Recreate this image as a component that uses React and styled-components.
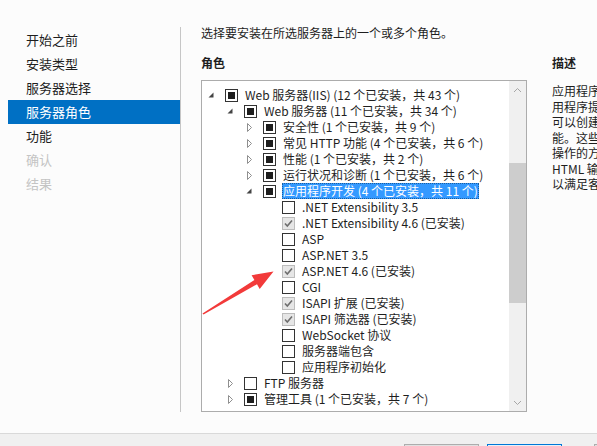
import React from "react";
import styled, { createGlobalStyle, css } from "styled-components";

const GlobalStyle = createGlobalStyle`
  html, body {
    margin: 0;
    padding: 0;
    background: #fcfcfc;
    overflow: hidden;
  }
  body {
    font-family: "Noto Sans CJK SC", "Noto Sans", sans-serif;
    color: #1e1e1e;
  }
`;

const navItems = [
  { label: "开始之前" },
  { label: "安装类型" },
  { label: "服务器选择" },
  { label: "服务器角色", active: true },
  { label: "功能" },
  { label: "确认", disabled: true },
  { label: "结果", disabled: true },
];

// level: tree depth, exp: expanded / collapsed / none, box: partial / empty / checked
const treeRows = [
  { level: 1, exp: "open", box: "partial", label: "Web 服务器(IIS) (12 个已安装，共 43 个)" },
  { level: 2, exp: "open", box: "partial", label: "Web 服务器 (11 个已安装，共 34 个)" },
  { level: 3, exp: "closed", box: "partial", label: "安全性 (1 个已安装，共 9 个)" },
  { level: 3, exp: "closed", box: "partial", label: "常见 HTTP 功能 (4 个已安装，共 6 个)" },
  { level: 3, exp: "closed", box: "partial", label: "性能 (1 个已安装，共 2 个)" },
  { level: 3, exp: "closed", box: "partial", label: "运行状况和诊断 (1 个已安装，共 6 个)" },
  { level: 3, exp: "open", box: "partial", label: "应用程序开发 (4 个已安装，共 11 个)", selected: true },
  { level: 4, box: "empty", label: ".NET Extensibility 3.5" },
  { level: 4, box: "checked", label: ".NET Extensibility 4.6 (已安装)" },
  { level: 4, box: "empty", label: "ASP" },
  { level: 4, box: "empty", label: "ASP.NET 3.5" },
  { level: 4, box: "checked", label: "ASP.NET 4.6 (已安装)" },
  { level: 4, box: "empty", label: "CGI" },
  { level: 4, box: "checked", label: "ISAPI 扩展 (已安装)" },
  { level: 4, box: "checked", label: "ISAPI 筛选器 (已安装)" },
  { level: 4, box: "empty", label: "WebSocket 协议" },
  { level: 4, box: "empty", label: "服务器端包含" },
  { level: 4, box: "empty", label: "应用程序初始化" },
  { level: 2, exp: "closed", box: "empty", label: "FTP 服务器" },
  { level: 2, exp: "closed", box: "partial", label: "管理工具 (1 个已安装，共 7 个)" },
];

const descLines = [
  "应用程序开发提供了用于开发和托管 Web 应",
  "用程序提供的基础结构。使用这些功能",
  "可以创建 Web 内容或扩展 IIS 的功",
  "能。这些技术通常提供了一种执行动态",
  "操作的方法，从而能够创建",
  "HTML 输出，然后 IIS 发送该输出",
  "以满足客户端请求。",
];

const Page = styled.div`
  position: relative;
  width: 597px;
  height: 446px;
  display: flex;
  flex-direction: column;
  overflow: hidden;
`;

const Main = styled.div`
  height: 433px;
  flex-shrink: 0;
  display: flex;
`;

const Nav = styled.nav`
  width: 172px;
  margin-left: 8px;
  padding-top: 28px;
  flex-shrink: 0;
`;

const NavItem = styled.div`
  height: 24px;
  line-height: 24px;
  padding-left: 18px;
  font-size: 13px;
  color: #1e1e1e;
  ${(p) =>
    p.$active &&
    css`
      background: #0070c4;
      color: #ffffff;
    `}
  ${(p) =>
    p.$disabled &&
    css`
      color: #c4c4c4;
    `}
`;

const Divider = styled.div`
  width: 1px;
  margin-top: 27px;
  height: 385px;
  background: #c6c6c6;
  flex-shrink: 0;
`;

const Content = styled.section`
  flex: 1;
  padding: 25px 0 0 20px;
  min-width: 0;
`;

const Intro = styled.div`
  font-size: 12px;
  line-height: 16px;
  white-space: nowrap;
`;

const Columns = styled.div`
  display: flex;
  gap: 25px;
  margin-top: 14px;
`;

const RoleColumn = styled.div`
  width: 326px;
  flex-shrink: 0;
`;

const DescColumn = styled.div`
  flex: 1;
  min-width: 0;
  overflow: hidden;
`;

const Heading = styled.div`
  font-size: 12px;
  font-weight: bold;
  line-height: 16px;
  height: 16px;
`;

const TreeBox = styled.div`
  margin-top: 9px;
  height: 332px;
  box-sizing: border-box;
  border: 1px solid #acacac;
  background: #ffffff;
  display: flex;
`;

const TreeList = styled.div`
  flex: 1;
  padding-top: 6px;
  overflow: hidden;
`;

const Row = styled.div`
  display: flex;
  align-items: center;
  height: 16px;
  padding-left: ${(p) => 4 + (p.$level - 1) * 19}px;
  font-size: 12px;
  white-space: nowrap;
`;

const Expander = styled.span`
  width: 19px;
  height: 16px;
  flex-shrink: 0;
  display: flex;
  align-items: center;
`;

const Box = styled.span`
  width: 13px;
  height: 13px;
  box-sizing: border-box;
  flex-shrink: 0;
  border: 1px solid #333333;
  background: #ffffff;
  display: flex;
  align-items: center;
  justify-content: center;
  ${(p) =>
    p.$state === "checked" &&
    css`
      border-color: #bcbcbc;
      background: #e6e6e6;
    `}
`;

const Fill = styled.span`
  width: 7px;
  height: 7px;
  background: #1e1e1e;
`;

const Label = styled.span`
  margin-left: 6px;
  line-height: 16px;
  height: 16px;
  padding: 0 1px;
  ${(p) =>
    p.$selected &&
    css`
      background: #3399ff;
      color: #ffffff;
      outline: 1px dotted #1b5e9e;
      outline-offset: -1px;
    `}
`;

const ScrollBar = styled.div`
  width: 17px;
  flex-shrink: 0;
  background: #f0f0f0;
  display: flex;
  flex-direction: column;
`;

const ScrollButton = styled.div`
  height: 17px;
  display: flex;
  align-items: center;
  justify-content: center;
`;

const Track = styled.div`
  flex: 1;
  padding-top: 65px;
`;

const Thumb = styled.div`
  height: 140px;
  background: #cdcdcd;
`;

const DescText = styled.div`
  margin-top: 12px;
  font-size: 12px;
  line-height: 15.5px;
  white-space: nowrap;
`;

const Footer = styled.footer`
  flex: 1;
  min-height: 0;
  overflow: hidden;
  background: #f0f0f0;
  border-top: 1px solid #d9d9d9;
  display: flex;
  align-items: flex-start;
  padding: 10px 0 0 404px;
  gap: 8px;
`;

const Button = styled.div`
  width: 75px;
  height: 23px;
  box-sizing: border-box;
  flex-shrink: 0;
  border: 1px solid #adadad;
  background: #e1e1e1;
  ${(p) =>
    p.$primary &&
    css`
      border-color: #0078d7;
      background: #e5f1fb;
    `}
  ${(p) =>
    p.$apart &&
    css`
      margin-left: 24px;
    `}
`;

const Arrow = styled.svg`
  position: absolute;
  left: 0;
  top: 0;
  pointer-events: none;
`;

const Toggle = ({ exp }) => {
  if (exp === "open") {
    return (
      <svg width="8" height="8" viewBox="0 0 8 8" style={{ marginLeft: 1 }}>
        <polygon points="6.5,1.5 6.5,6.5 1.5,6.5" fill="#444444" />
      </svg>
    );
  }
  if (exp === "closed") {
    return (
      <svg width="8" height="9" viewBox="0 0 8 9" style={{ marginLeft: 2 }}>
        <polygon points="1.5,0.5 5.5,4.5 1.5,8.5" fill="none" stroke="#8f8f8f" strokeWidth="1" />
      </svg>
    );
  }
  return null;
};

const CheckBox = ({ state }) => (
  <Box $state={state}>
    {state === "partial" && <Fill />}
    {state === "checked" && (
      <svg width="11" height="11" viewBox="0 0 11 11">
        <polyline points="2,5.5 4.3,8 9,2.5" fill="none" stroke="#6e6e6e" strokeWidth="1.6" />
      </svg>
    )}
  </Box>
);

const Chevron = ({ up }) => (
  <svg width="9" height="6" viewBox="0 0 9 6">
    <polyline
      points={up ? "1,5 4.5,1.5 8,5" : "1,1 4.5,4.5 8,1"}
      fill="none"
      stroke="#a6a6a6"
      strokeWidth="1"
    />
  </svg>
);

export default function App() {
  return (
    <Page>
      <GlobalStyle />
      <Main>
        <Nav>
          {navItems.map((item) => (
            <NavItem key={item.label} $active={item.active} $disabled={item.disabled}>
              {item.label}
            </NavItem>
          ))}
        </Nav>
        <Divider />
        <Content>
          <Intro>选择要安装在所选服务器上的一个或多个角色。</Intro>
          <Columns>
            <RoleColumn>
              <Heading>角色</Heading>
              <TreeBox>
                <TreeList>
                  {treeRows.map((row, i) => (
                    <Row key={i} $level={row.level}>
                      <Expander>
                        <Toggle exp={row.exp} />
                      </Expander>
                      <CheckBox state={row.box} />
                      <Label $selected={row.selected}>{row.label}</Label>
                    </Row>
                  ))}
                </TreeList>
                <ScrollBar>
                  <ScrollButton>
                    <Chevron up />
                  </ScrollButton>
                  <Track>
                    <Thumb />
                  </Track>
                  <ScrollButton>
                    <Chevron />
                  </ScrollButton>
                </ScrollBar>
              </TreeBox>
            </RoleColumn>
            <DescColumn>
              <Heading>描述</Heading>
              <DescText>
                {descLines.map((line) => (
                  <div key={line}>{line}</div>
                ))}
              </DescText>
            </DescColumn>
          </Columns>
        </Content>
      </Main>
      <Footer>
        <Button />
        <Button $primary />
        <Button $apart />
      </Footer>
      <Arrow width="597" height="446" viewBox="0 0 597 446">
        <polygon
          points="202.5,313.5 254.4,280 251.6,275.2 273.5,271.5 259.7,289 257,284.3 203.5,314.5"
          fill="#f23a3a"
        />
      </Arrow>
    </Page>
  );
}
